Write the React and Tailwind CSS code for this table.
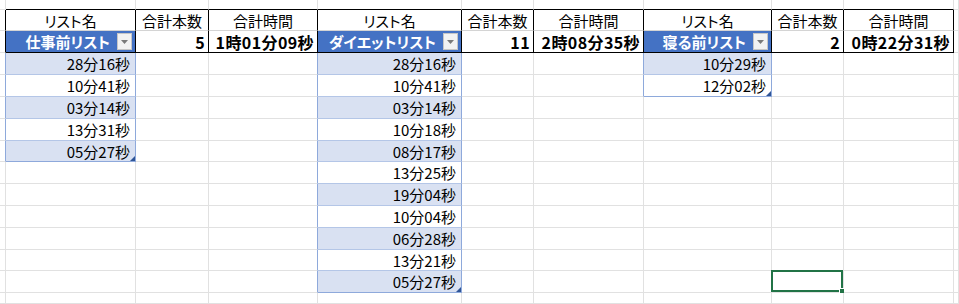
import React from 'react';

const lists = [
    {
        name: '仕事前リスト',
        count: '5',
        total: '1時01分09秒',
        items: ['28分16秒', '10分41秒', '03分14秒', '13分31秒', '05分27秒'],
    },
    {
        name: 'ダイエットリスト',
        count: '11',
        total: '2時08分35秒',
        items: [
            '28分16秒', '10分41秒', '03分14秒', '10分18秒', '08分17秒', '13分25秒',
            '19分04秒', '10分04秒', '06分28秒', '13分21秒', '05分27秒',
        ],
    },
    {
        name: '寝る前リスト',
        count: '2',
        total: '0時22分31秒',
        items: ['10分29秒', '12分02秒'],
    },
];

const labels = ['リスト名', '合計本数', '合計時間'];

const ROWS = 15;
const COLS = 11;

// which list / which column inside it
const slot = (c) => (c >= 1 && c <= 9 ? { list: Math.floor((c - 1) / 3), pos: (c - 1) % 3 } : null);

const isData = (r, c) => {
    const s = slot(c);
    if (!s || s.pos !== 0) return false;
    return r >= 3 && r < 3 + lists[s.list].items.length;
};

const rightBorder = (r, c) => {
    if ((r === 1 || r === 2) && c <= 9) return 'border-r-black';
    if (isData(r, c) || isData(r, c + 1)) return 'border-r-[#8ea9db]';
    return 'border-r-[#e1e1e1]';
};

const bottomBorder = (r, c) => {
    const inTable = c >= 1 && c <= 9;
    if (r === 0 && inTable) return 'border-b-black';
    if (r === 2 && inTable) return 'border-b-black';
    if (r === 1 && inTable) return 'border-b-[#d4d4d4]';
    if (isData(r, c)) {
        const s = slot(c);
        const last = r === 2 + lists[s.list].items.length;
        return last ? 'border-b-[#8ea9db]' : 'border-b-[#b4c6e7]';
    }
    return 'border-b-[#e1e1e1]';
};

const Dropdown = () => (
    <span className="ml-[7px] flex h-[17px] w-[15px] shrink-0 items-center justify-center border border-[#c6c6c6] bg-[#f2f2f2]">
        <svg width="7" height="4" viewBox="0 0 7 4">
            <path d="M0 0h7L3.5 4z" fill="#7a7a7a" />
        </svg>
    </span>
);

const Cell = ({ r, c }) => {
    const s = slot(c);
    let bg = 'bg-white';
    let content = null;
    let extra = '';

    if (s && r === 1) {
        extra = 'justify-center';
        content = labels[s.pos];
    } else if (s && r === 2) {
        if (s.pos === 0) {
            bg = 'bg-[#4472c4]';
            extra = 'justify-end pr-[3px] font-bold text-white';
            content = (
                <>
                    <span>{lists[s.list].name}</span>
                    <Dropdown />
                </>
            );
        } else {
            extra = 'justify-end pr-[3px] font-bold text-[16px] tracking-[0.4px]';
            content = s.pos === 1 ? lists[s.list].count : lists[s.list].total;
        }
    } else if (isData(r, c)) {
        const idx = r - 3;
        bg = idx % 2 === 0 ? 'bg-[#d9e1f2]' : 'bg-white';
        extra = 'justify-end pr-[5px]';
        content = lists[s.list].items[idx];
    }

    const lastData = isData(r, c) && !isData(r + 1, c);
    const selected = r === 13 && c === 8;

    return (
        <div className={`relative flex items-center whitespace-nowrap border-r border-b leading-none ${rightBorder(r, c)} ${bottomBorder(r, c)} ${bg} ${extra}`}>
            {content}
            {lastData && (
                <span className="absolute bottom-0 right-0 h-0 w-0 border-b-[5px] border-l-[5px] border-b-[#2f5597] border-l-transparent" />
            )}
            {selected && (
                <span className="absolute -left-[1px] -top-[1px] bottom-0 right-0 border-2 border-[#217346]">
                    <span className="absolute -bottom-[4px] -right-[4px] h-[6px] w-[6px] border border-white bg-[#217346]" />
                </span>
            )}
        </div>
    );
};

export default function App() {
    const cells = [];
    for (let r = 0; r < ROWS; r++) {
        for (let c = 0; c < COLS; c++) {
            cells.push(<Cell key={`${r}-${c}`} r={r} c={c} />);
        }
    }

    return (
        <div className="h-[304px] w-[959px] overflow-hidden bg-white font-['Noto_Sans_CJK_JP',sans-serif] text-[15px] text-black">
            <div className="grid h-full grid-cols-[6px_130px_73px_109px_144px_72px_110px_128px_72px_110px_1fr] grid-rows-[10px_21px_22px_22px_22px_22px_22px_21px_22px_22px_22px_22px_21px_22px_1fr] [font-feature-settings:'palt']">
                {cells}
            </div>
        </div>
    );
}
